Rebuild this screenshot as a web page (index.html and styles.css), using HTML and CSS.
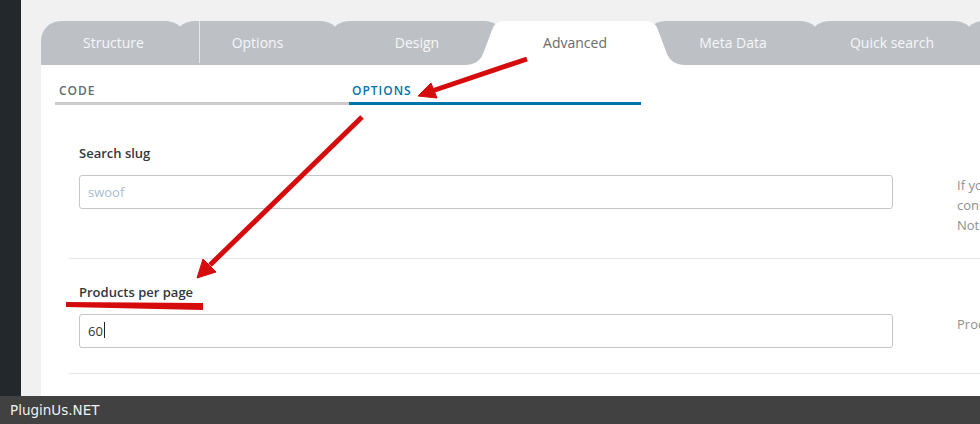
FILE: index.html
```html
<!DOCTYPE html>
<html lang="en">
  <head>
    <meta charset="UTF-8" />
    <meta name="viewport" content="width=device-width, initial-scale=1.0" />
    <title>Advanced options</title>
    <link rel="stylesheet" href="styles.css">
  </head>
  <body>
    <div class="screen">
      <aside class="sidebar"></aside>
      <main class="content">
        <nav class="tabs">
          <div class="tab tab-structure">Structure</div>
          <div class="tab tab-options">Options</div>
          <div class="tab tab-design">Design</div>
          <div class="tab tab-advanced active">
            <svg class="tab-shape" viewBox="0 0 220 44" width="220" height="44">
              <path d="M0 44 C9 44 15 40 18 33 L27 9 C29 3 33 0 39 0 L181 0 C187 0 191 3 193 9 L202 33 C205 40 211 44 220 44 Z" fill="#fff" />
            </svg>
            <span class="tab-label">Advanced</span>
          </div>
          <div class="tab tab-meta">Meta Data</div>
          <div class="tab tab-quick">Quick search</div>
          <div class="tab tab-more"></div>
        </nav>

        <section class="panel">
          <div class="subtabs">
            <a class="subtab">Code</a>
            <a class="subtab current">Options</a>
          </div>

          <div class="fields">
            <div class="field">
              <label for="slug">Search slug</label>
              <div class="field-body">
                <input type="text" id="slug" class="text-input" placeholder="swoof" />
                <p class="field-desc">If you want to change the search key<br>consider that old links will not work<br>Note: use only latin letters</p>
              </div>
            </div>
            <div class="field">
              <label for="per_page">Products per page</label>
              <div class="field-body">
                <div class="input-wrap">
                  <input type="text" id="per_page" class="text-input" value="60" />
                  <span class="caret"></span>
                </div>
                <p class="field-desc">Products per page on the search results</p>
              </div>
            </div>
          </div>
        </section>
      </main>
    </div>
    <footer class="brand-bar">PluginUs.NET</footer>

    <!-- red annotation marks drawn over the screenshot -->
    <svg class="marks" width="980" height="424" viewBox="0 0 980 424">
      <g fill="#d60b0b" stroke="#d60b0b">
        <line x1="527" y1="59" x2="432" y2="91" stroke-width="5" />
        <polygon points="418,96 431,83 437,98" stroke-width="1" />
        <line x1="362" y1="117" x2="210" y2="265" stroke-width="5" />
        <polygon points="197,278 203,259 216,272" stroke-width="1" />
        <polygon points="66,302 203,303 203,310 66,307" stroke="none" />
      </g>
    </svg>
  </body>
</html>
```

FILE: styles.css
```css
body {
  margin: 0;
  width: 980px;
  height: 424px;
  overflow: hidden;
  position: relative;
  font-family: "Open Sans", Arial, sans-serif;
}
.screen {
  display: flex;
  height: 396px;
}
.sidebar {
  width: 21px;
  flex: none;
  background-color: #23282d;
}
.content {
  flex: 1;
  display: flex;
  flex-direction: column;
  padding: 21px 0 0 20px;
  background-color: #f1f1f1;
  overflow: hidden;
}

/* main tabs */
.tabs {
  display: flex;
  height: 44px;
  flex: none;
}
.tab {
  position: relative;
  z-index: 1;
  flex: none;
  height: 44px;
  margin-left: -12px;
  display: flex;
  align-items: center;
  justify-content: center;
  background-color: #bdc1c6;
  border-radius: 20px 20px 0 0;
  color: #f6f7f8;
  font-size: 14px;
  line-height: 20px;
  padding-bottom: 1px;
  box-sizing: border-box;
}
.tab-structure {
  margin-left: 0;
  width: 145px;
}
.tab-options {
  width: 167px;
}
.tab-options::before {
  content: "";
  position: absolute;
  left: 25px;
  top: 0;
  bottom: 2px;
  width: 1px;
  background-color: #e4e6e8;
}
.tab-design {
  width: 176px;
}
.tab-advanced {
  width: 164px;
}
.tab-meta {
  width: 176px;
}
.tab-quick {
  width: 166px;
}
.tab-more {
  width: 100px;
}
.tab.active {
  z-index: 2;
  background: none;
  color: #6b6b6b;
}
.tab-shape {
  position: absolute;
  left: -28px;
  top: 0;
}
.tab-label {
  position: relative;
}

/* panel */
.panel {
  flex: 1;
  background-color: #fff;
  padding-left: 14px;
}
.subtabs {
  display: flex;
}
.subtab {
  padding: 18px 4px 3px;
  border-bottom: 3px solid #cccccc;
  font-size: 12px;
  line-height: 16px;
  font-weight: 600;
  letter-spacing: 1px;
  text-transform: uppercase;
  color: #5f6b77;
  width: 286px;
}
.subtab.current {
  width: 285px;
  padding-left: 3px;
  border-bottom-color: #0073aa;
  color: #0073aa;
}

.fields {
  padding: 15px 0 0 14px;
}
.field {
  padding: 23px 0 23px 10px;
  border-bottom: 1px solid #e5e7ea;
}
.field:last-child {
  padding-bottom: 25px;
}
.field label {
  display: block;
  margin-bottom: 12px;
  font-size: 13px;
  line-height: 20px;
  font-weight: 600;
  color: #32373c;
}
.field-body {
  display: flex;
  align-items: flex-start;
}
.input-wrap {
  position: relative;
  flex: none;
}
.text-input {
  display: block;
  flex: none;
  width: 814px;
  height: 34px;
  padding: 0 8px;
  box-sizing: border-box;
  border: 1px solid #c4c7ca;
  border-radius: 3px;
  font-family: "Open Sans", Arial, sans-serif;
  font-size: 13px;
  color: #333;
  outline: none;
}
.text-input::placeholder {
  color: #a8bdd2;
}
.caret {
  position: absolute;
  left: 25px;
  top: 8px;
  width: 1px;
  height: 16px;
  background-color: #222;
}
.field-desc {
  margin: 0 0 0 64px;
  flex: none;
  width: 300px;
  font-size: 13px;
  line-height: 20px;
  color: #8f8f8f;
  white-space: nowrap;
}

/* watermark bar */
.brand-bar {
  height: 28px;
  padding-left: 10px;
  background-color: #414141;
  color: #f0f0f0;
  font-family: "DejaVu Sans", sans-serif;
  font-size: 13.5px;
  line-height: 28px;
}
.marks {
  position: absolute;
  z-index: 5;
  left: 0;
  top: 0;
  pointer-events: none;
}
```
